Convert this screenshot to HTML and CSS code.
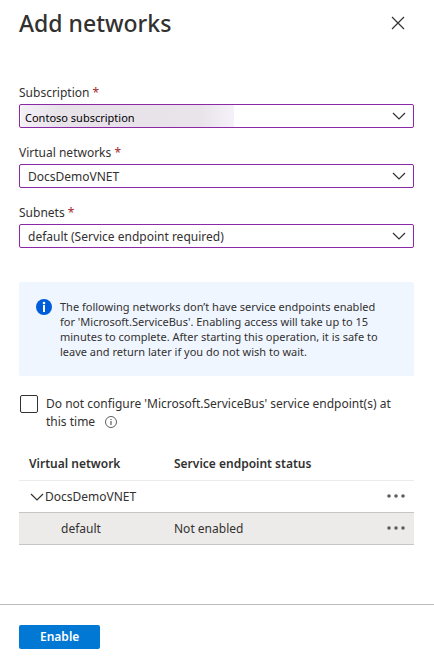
FILE: index.html
```html
<!DOCTYPE html>
<html lang="en">
<head>
    <meta charset="UTF-8">
    <meta name="viewport" content="width=device-width, initial-scale=1.0">
    <title>Add networks</title>
    <link rel="stylesheet" href="styles.css">
</head>
<body>
    <header class="panel-header">
        <h1>Add networks</h1>
        <button type="button" class="icon-button" aria-label="Close">
            <svg width="14" height="14" viewBox="0 0 14 14"><path d="M1 1l12 12M13 1L1 13"/></svg>
        </button>
    </header>

    <main class="panel-body">
        <div class="field">
            <label for="subscription">Subscription <span class="required">*</span></label>
            <div class="dropdown">
                <select id="subscription" class="masked">
                    <option>Contoso subscription</option>
                </select>
                <svg class="chevron" width="14" height="8" viewBox="0 0 14 8"><path d="M1 1l6 6 6-6"/></svg>
            </div>
        </div>
        <div class="field">
            <label for="vnet">Virtual networks <span class="required">*</span></label>
            <div class="dropdown">
                <select id="vnet">
                    <option>DocsDemoVNET</option>
                </select>
                <svg class="chevron" width="14" height="8" viewBox="0 0 14 8"><path d="M1 1l6 6 6-6"/></svg>
            </div>
        </div>
        <div class="field">
            <label for="subnets">Subnets <span class="required">*</span></label>
            <div class="dropdown">
                <select id="subnets">
                    <option>default (Service endpoint required)</option>
                </select>
                <svg class="chevron" width="14" height="8" viewBox="0 0 14 8"><path d="M1 1l6 6 6-6"/></svg>
            </div>
        </div>

        <div class="info-box">
            <svg class="info-icon" width="16" height="16" viewBox="0 0 16 16">
                <circle cx="8" cy="8" r="8" fill="#015cda"/>
                <circle cx="8" cy="4" r="1.3" fill="#fff"/>
                <rect x="7" y="6" width="2" height="7" fill="#fff"/>
            </svg>
            <p>The following networks don’t have service endpoints enabled for 'Microsoft.ServiceBus'. Enabling access will take up to 15 minutes to complete. After starting this operation, it is safe to leave and return later if you do not wish to wait.</p>
        </div>

        <div class="check-row">
            <input type="checkbox" id="skip">
            <label for="skip">Do not configure 'Microsoft.ServiceBus' service endpoint(s) at this time
                <svg class="hint-icon" width="12" height="12" viewBox="0 0 12 12">
                    <circle cx="6" cy="6" r="5.5" fill="none" stroke="#605e5c"/>
                    <path class="hint-mark" d="M6 5v4M6 3v1"/>
                </svg>
            </label>
        </div>

        <table>
            <thead>
                <tr>
                    <th class="col-network">Virtual network</th>
                    <th>Service endpoint status</th>
                    <th class="col-menu"></th>
                </tr>
            </thead>
            <tbody>
                <tr>
                    <td>
                        <button type="button" class="expander">
                            <svg width="14" height="8" viewBox="0 0 14 8"><path d="M1 1l6 6 6-6"/></svg>
                            DocsDemoVNET
                        </button>
                    </td>
                    <td></td>
                    <td class="menu">
                        <button type="button" class="icon-button" aria-label="More actions">
                            <svg class="dots" width="18" height="4" viewBox="0 0 18 4"><circle cx="2" cy="2" r="1.8"/><circle cx="9" cy="2" r="1.8"/><circle cx="16" cy="2" r="1.8"/></svg>
                        </button>
                    </td>
                </tr>
                <tr class="selected">
                    <td class="child">default</td>
                    <td>Not enabled</td>
                    <td class="menu">
                        <button type="button" class="icon-button" aria-label="More actions">
                            <svg class="dots" width="18" height="4" viewBox="0 0 18 4"><circle cx="2" cy="2" r="1.8"/><circle cx="9" cy="2" r="1.8"/><circle cx="16" cy="2" r="1.8"/></svg>
                        </button>
                    </td>
                </tr>
            </tbody>
        </table>
    </main>

    <footer class="panel-footer">
        <button type="button" class="primary">Enable</button>
    </footer>
</body>
</html>
```

FILE: styles.css
```css
* {
    box-sizing: border-box;
}

body {
    display: flex;
    flex-direction: column;
    min-height: 100vh;
    margin: 0;
    background: #fff;
    color: #323130;
    font-family: "Segoe UI", "Noto Sans", "Open Sans", sans-serif;
    font-size: 12px;
    line-height: 18px;
}

button,
select {
    font: inherit;
    color: inherit;
}

svg path {
    fill: none;
    stroke: #323130;
    stroke-width: 1.2;
}

.panel-header {
    display: flex;
    align-items: center;
    justify-content: space-between;
    padding: 7px 29px 0 19px;
}

h1 {
    margin: 0;
    font-size: 23px;
    font-weight: 500;
    line-height: 32px;
}

.icon-button {
    display: flex;
    padding: 0;
    border: none;
    background: none;
    cursor: pointer;
}

.panel-body {
    flex: 1;
    padding: 45px 20px 24px 19px;
}

.field {
    margin-bottom: 16px;
}

.field label {
    display: block;
    margin-bottom: 2px;
}

.required {
    color: #a4262c;
}

.dropdown {
    position: relative;
}

select {
    display: block;
    width: 100%;
    height: 24px;
    padding: 2px 32px 0 8px;
    appearance: none;
    background: #fff;
    border: 1px solid #8a28a5;
    border-radius: 2px;
}

.masked {
    padding-top: 4px;
    padding-left: 5px;
    color: #000;
    font-size: 11px;
    background: linear-gradient(to right, #f5f0f8, #e6e2e8 40px, #e8e4ea 180px, #f6f1f9 212px) no-repeat 1px 0 / 213px 100%;
}

.chevron {
    position: absolute;
    top: 8px;
    right: 8px;
    pointer-events: none;
}

.info-box {
    display: flex;
    gap: 8px;
    margin-top: 34px;
    padding: 17px 24px 17px 17px;
    background: #f0f6ff;
    border-radius: 2px;
}

.info-icon {
    flex: none;
}

.info-box p {
    margin: 0;
    font-size: 11px;
    line-height: 15px;
}

.check-row {
    display: flex;
    gap: 8px;
    margin-top: 19px;
}

.check-row input {
    flex: none;
    width: 18px;
    height: 18px;
    margin: 0 0 0 1px;
    appearance: none;
    border: 1px solid #323130;
    border-radius: 2px;
}

.check-row input:checked {
    background: #0078d4;
}

.hint-icon {
    margin-left: 7px;
    vertical-align: -2px;
}

.hint-mark {
    stroke: #605e5c;
}

table {
    width: 100%;
    margin-top: 17px;
    table-layout: fixed;
    border-collapse: collapse;
}

th,
td {
    height: 32px;
    padding: 0 0 0 10px;
    text-align: left;
}

td {
    padding-top: 2px;
}

th {
    font-weight: 600;
    border-bottom: 1px solid #edebe9;
}

.col-network {
    width: 145px;
}

.col-menu {
    width: 40px;
}

.expander {
    display: flex;
    align-items: center;
    gap: 1px;
    padding: 0 0 0 1px;
    border: none;
    background: none;
    cursor: pointer;
}

.child {
    padding-left: 42px;
}

.menu {
    padding: 0 9px 0 0;
}

.menu .icon-button {
    margin-left: auto;
}

.dots {
    fill: #605e5c;
}

.selected {
    background: #edebe9;
    border-top: 1px solid #c8c6c4;
    border-bottom: 1px solid #c8c6c4;
}

.panel-footer {
    padding: 20px 19px 19px;
    border-top: 1px solid #bebbb8;
}

.primary {
    height: 24px;
    padding: 0 21px;
    border: none;
    border-radius: 2px;
    background: #0078d4;
    color: #fff;
    font-weight: 600;
    cursor: pointer;
}
```
